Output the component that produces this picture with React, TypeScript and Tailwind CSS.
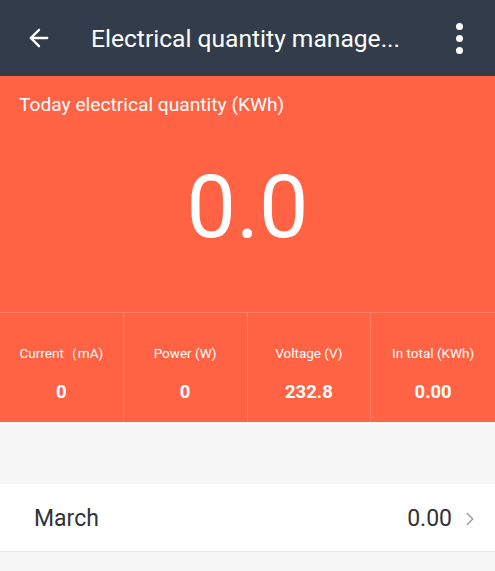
import React from 'react';
import { ArrowLeft, ChevronRight } from 'lucide-react';

const stats = [
  { label: 'Current（mA)', value: '0' },
  { label: 'Power (W)', value: '0' },
  { label: 'Voltage (V)', value: '232.8' },
  { label: 'In total (KWh)', value: '0.00' },
];

export default function App() {
  return (
    <div
      className="w-[495px] h-[571px] overflow-hidden bg-[#f7f7f7]"
      style={{ fontFamily: 'Roboto, "Noto Sans", sans-serif' }}
    >
      <div className="h-[76px] bg-[#323c4b] flex items-center text-white">
        <div className="w-[78px] flex justify-center">
          <ArrowLeft className="w-[28px] h-[28px]" strokeWidth={2} />
        </div>
        <div className="flex-1 pl-[13px] pt-[3px] text-[24.6px] leading-none whitespace-nowrap">
          Electrical quantity manage...
        </div>
        <div className="w-[72px] flex flex-col items-center gap-[5px]">
          <span className="w-[7px] h-[7px] rounded-full bg-white" />
          <span className="w-[7px] h-[7px] rounded-full bg-white" />
          <span className="w-[7px] h-[7px] rounded-full bg-white" />
        </div>
      </div>

      <div className="bg-[#ff6344] text-white">
        <div className="h-[236px] flex flex-col">
          <div className="pt-[16px] pl-[19px] text-[19.2px] leading-[26px]">
            Today electrical quantity (KWh)
          </div>
          <div className="flex-1 flex items-center justify-center pb-[16px]">
            <span className="text-[88px] leading-none font-normal">0.0</span>
          </div>
        </div>
        <div className="grid grid-cols-4 h-[110px] border-t border-[#ff7f66]">
          {stats.map((s, i) => (
            <div
              key={s.label}
              className={`flex flex-col items-center justify-center gap-[22px] pt-[13px] ${
                i < 3 ? 'border-r border-[#ff7f66]' : ''
              }`}
            >
              <span className="text-[13.5px] leading-none">{s.label}</span>
              <span className="text-[18.5px] leading-none font-bold">{s.value}</span>
            </div>
          ))}
        </div>
      </div>

      <div className="h-[62px]" />

      <div className="h-[68px] bg-white border-b border-[#e6e6e6] flex items-center pl-[34px] pr-[14px] pt-[3px]">
        <span className="flex-1 text-[23px] text-[#333333]">March</span>
        <span className="text-[23px] text-[#333333]">0.00</span>
        <ChevronRight className="w-[22px] h-[22px] text-[#999999] ml-[7px]" strokeWidth={1.5} />
      </div>
    </div>
  );
}
